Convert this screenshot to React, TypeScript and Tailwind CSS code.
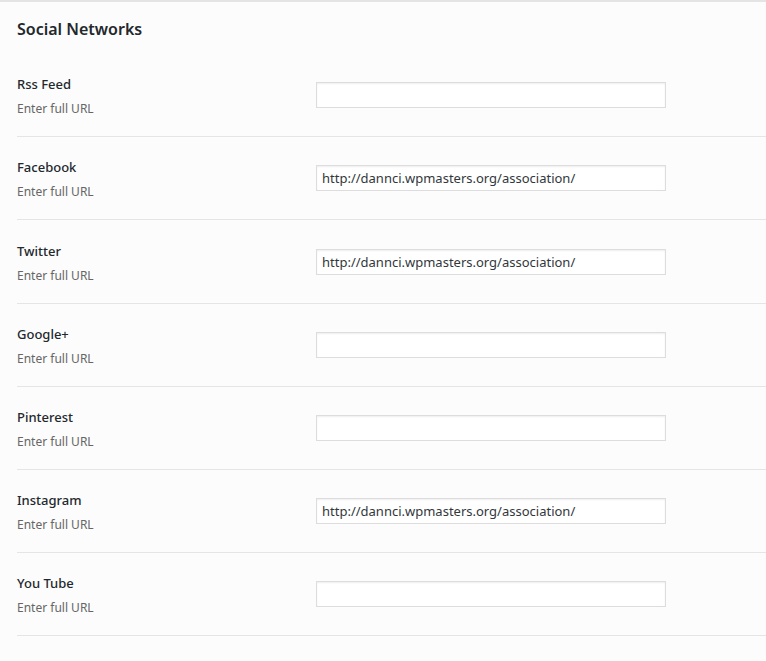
const networks = [
  { label: "Rss Feed", value: "" },
  { label: "Facebook", value: "http://dannci.wpmasters.org/association/" },
  { label: "Twitter", value: "http://dannci.wpmasters.org/association/" },
  { label: "Google+", value: "" },
  { label: "Pinterest", value: "" },
  { label: "Instagram", value: "http://dannci.wpmasters.org/association/" },
  { label: "You Tube", value: "" },
];

export default function App() {
  return (
    <div
      className="h-[661px] w-[766px] overflow-hidden border-t-2 border-[#e4e4e4] bg-[#fcfcfc] pl-[17px]"
      style={{ fontFamily: '"Noto Sans", "Open Sans", sans-serif' }}
    >
      <h2 className="pt-[16px] text-[16px] font-semibold leading-[22px] text-[#23282d]">
        Social Networks
      </h2>
      <div className="mt-[14px]">
        {networks.map((n) => (
          <div
            key={n.label}
            className="grid grid-cols-[299px_350px] items-start border-b border-[#e5e5e5] pt-[20.2px] pb-[18px]"
          >
            <div className="flex flex-col gap-[5px]">
              <span className="text-[13px] font-medium leading-[20px] text-[#23282d]">
                {n.label}
              </span>
              <span className="text-[12px] leading-[19px] text-[#666]">
                Enter full URL
              </span>
            </div>
            <input
              type="text"
              defaultValue={n.value}
              className="mt-[8px] h-[26px] w-[350px] border border-[#ddd] bg-white px-[5px] text-[13px] text-[#32373c] shadow-[inset_0_1px_2px_rgba(0,0,0,0.07)] outline-none"
              style={{ fontFamily: '"Noto Sans", "Open Sans", sans-serif' }}
            />
          </div>
        ))}
      </div>
    </div>
  );
}
